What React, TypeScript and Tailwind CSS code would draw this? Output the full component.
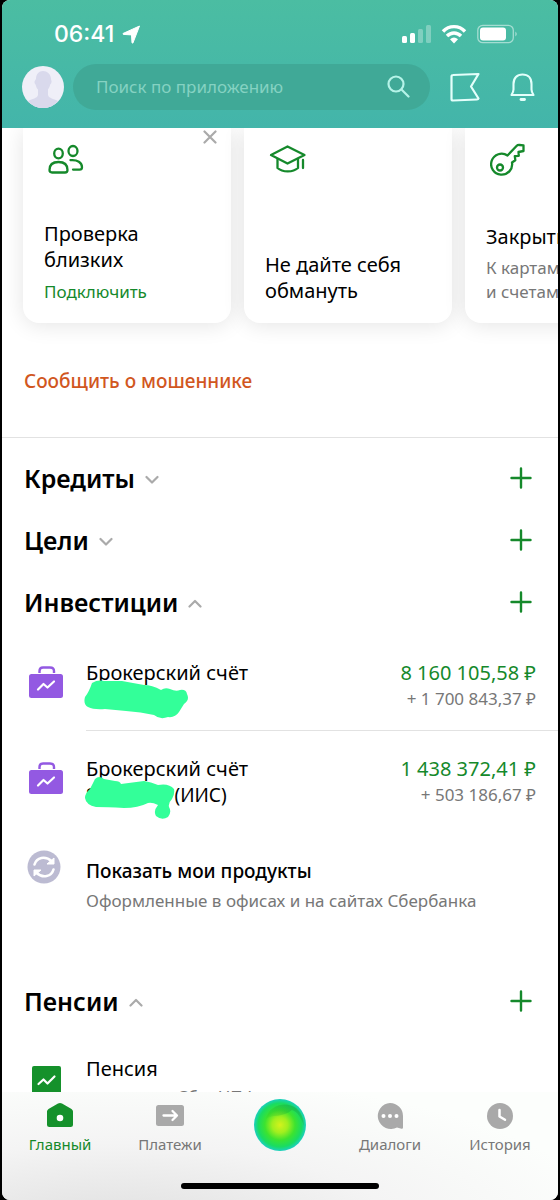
import type { ReactNode } from "react";

const Avatar = () => (
    <svg viewBox="0 0 42 42" className="size-[42px] shrink-0 rounded-full">
        <rect width="42" height="42" fill="#efeff8" />
        <path
            d="M14 13c0-5 3-8 7-8s8 3 8 8c0 1 1 2 .4 3.500-.4 1.500-1.200 1.600-1.600 3.500-.4 1.600-1.300 2.700-1.800 3.500v5c0 3 4 4 8 5.500 3 1 4 3 4 8H4c0-5 1-7 4-8 4-1.500 8-2.500 8-5.500v-5c-1-1-1.600-2-2-3.500-.4-1.900-1.200-2-1.500-3.500-.3-1.500.9-2.300 1.500-3.500Z"
            fill="#d9d9ec"
        />
    </svg>
);

const PeopleIcon = () => (
    <svg width="36" height="32" viewBox="0 0 36 32" fill="none" stroke="#15892b" strokeWidth="2.300" strokeLinecap="round" strokeLinejoin="round">
        <ellipse cx="10.500" cy="10.500" rx="4.300" ry="4.800" />
        <ellipse cx="25" cy="8" rx="4.500" ry="5" />
        <path d="M1.500 27c0-5.500 3-8 9-8s9 2.500 9 8c0 2-1 2.500-2.500 2.500H4c-1.500 0-2.500-.6-2.500-2.500Z" />
        <path d="M22.500 17.200c7-.6 11.500 2.300 11.500 7 0 1.500-1 2.400-2.500 2.400h-6.500" />
    </svg>
);

const GraduationIcon = () => (
    <svg width="38" height="32" viewBox="0 0 38 32" fill="none" stroke="#15892b" strokeWidth="2.300" strokeLinecap="round" strokeLinejoin="round">
        <path d="M2 12 18.500 3.500 35.500 12 18.500 20.500Z" />
        <path d="M8.500 16v9c5 4.500 15.500 4.500 20.500 0v-9M34 17v8" />
    </svg>
);

const KeyIcon = () => (
    <svg width="36" height="36" viewBox="0 0 36 36" fill="none" stroke="#15892b" strokeWidth="2.300" strokeLinecap="round" strokeLinejoin="round">
        <path d="m17.500 12.500 9-9.500q1.200-1.200 3-1l4 .4v5.600l-5 1 .3 3.800-4 .4.500 4-3.300 2.300A10.500 10.500 0 1 1 17.500 12.500Z" />
        <circle cx="10" cy="24.500" r="3" />
    </svg>
);

const PlusIcon = () => (
    <svg width="22" height="22" viewBox="0 0 22 22" fill="none" stroke="#15892b" strokeWidth="2.400" strokeLinecap="round">
        <path d="M11 1.500v19M1.500 11h19" />
    </svg>
);

const Chevron = ({ open }: { open?: boolean }) => (
    <svg width="14" height="10" viewBox="0 0 14 10" fill="none" stroke="#aaa" strokeWidth="2.200" strokeLinecap="round" strokeLinejoin="round" className="mt-1">
        <path d={open ? "m1.500 7.500 5.500-5.500 5.500 5.500" : "M1.500 2 7 7.500 12.500 2"} />
    </svg>
);

const CaseIcon = () => (
    <svg width="34" height="32" viewBox="0 0 34 32" fill="none">
        <path d="M10.500 7V5q0-3.500 3.500-3.500h7Q25 1.500 25 5v2" stroke="#9359e2" strokeWidth="2.400" />
        <rect y="8" width="34" height="24" rx="2.500" fill="#9359e2" />
        <path d="m9 23.500 5.500-5.500 4 3.500 6.500-6" stroke="#fff" strokeWidth="2.200" strokeLinecap="round" strokeLinejoin="round" />
    </svg>
);

const SyncIcon = () => (
    <svg width="34" height="34" viewBox="0 0 34 34" fill="none">
        <circle cx="17" cy="17" r="16.500" fill="#bcbbd2" />
        <path d="M7.500 14.500C9.500 7.500 18 5 25 11.500M26.500 19.500c-2 7-10.500 9.500-17.500 3" stroke="#fff" strokeWidth="2.600" strokeLinecap="round" />
        <path d="M27 8v6h-7ZM7 26v-6h7Z" fill="#fff" stroke="#fff" strokeWidth="1" strokeLinejoin="round" />
    </svg>
);

const ChartIcon = () => (
    <svg width="29" height="30" viewBox="0 0 29 30" fill="none">
        <rect width="29" height="30" rx="2" fill="#15912b" />
        <path d="m6.500 18 5-4.500 4 4 7-7" stroke="#fff" strokeWidth="2.200" strokeLinecap="round" strokeLinejoin="round" />
    </svg>
);

const StatusBar = () => (
    <div className="flex h-16 items-center justify-between pt-1 pr-10 pl-[52px] text-white">
        <div className="flex items-center gap-2 font-['Inter',sans-serif] text-[23px] leading-7 font-medium">
            <span>06:41</span>
            <svg width="19" height="19" viewBox="0 0 19 19" fill="currentColor" stroke="currentColor" strokeLinejoin="round">
                <path d="M17.500 1 1 8.500l.3.900 8.200.5.500 8 .9.200Z" />
            </svg>
        </div>
        <div className="flex items-center gap-2.5">
            <svg width="29" height="20" viewBox="0 0 29 20" fill="currentColor">
                <rect y="12" width="5" height="7" rx="1.500" />
                <rect x="8" y="9" width="5" height="10" rx="1.500" />
                <rect x="16" y="5" width="5" height="14" rx="1.500" opacity=".3" />
                <rect x="24" y="1" width="5" height="18" rx="1.500" opacity=".3" />
            </svg>
            <svg width="26" height="20" viewBox="0 0 26 20" fill="none" stroke="currentColor" strokeWidth="3.400">
                <path d="M2 7.500C8 1 18 1 24 7.500M6 12c4-4 10-4 14 0" />
                <path d="M9 15.200q4-3.200 8 0l-4 4.300Z" fill="currentColor" stroke="none" />
            </svg>
            <svg width="41" height="20" viewBox="0 0 41 20">
                <rect x=".8" y="1.300" width="35.500" height="17.400" rx="5" fill="none" stroke="#fff" strokeOpacity=".5" strokeWidth="1.300" />
                <rect x="3" y="3.500" width="26" height="13" rx="3" fill="#fff" />
                <path d="M38.300 7.500q3 2.500 0 5Z" fill="#fff" opacity=".5" />
            </svg>
        </div>
    </div>
);

const Header = () => (
    <header className="h-32 shrink-0 bg-linear-to-b from-[#4bbda2] to-[#43b5aa]">
        <StatusBar />
        <div className="flex items-center pr-[23px] pl-5">
            <Avatar />
            <label className="ml-[9px] flex h-[46px] min-w-0 flex-1 items-center rounded-full bg-[#40a997] pr-5 pl-[23px]">
                <input
                    type="search"
                    aria-label="Поиск по приложению"
                    placeholder="Поиск по приложению"
                    className="min-w-0 flex-1 bg-transparent text-[17px] leading-6 outline-none placeholder:text-[#85d2c2]"
                />
                <svg width="24" height="24" viewBox="0 0 24 24" fill="none" stroke="#b5f3e8" strokeWidth="2.200" strokeLinecap="round">
                    <circle cx="10" cy="9" r="7.500" />
                    <path d="m15.500 14.500 7 7" />
                </svg>
            </label>
            <button type="button" aria-label="Закладки" className="ml-5">
                <svg width="30" height="30" viewBox="0 0 30 30" fill="none" stroke="#e4fffb" strokeWidth="2.200" strokeLinejoin="round">
                    <path d="M3 3 28.500 2l-7.500 12.500 7.500 12q-.3 1-1.500 1L3 28.500q-1.500 0-1.500-1.500V4.500Q1.500 3 3 3Z" />
                </svg>
            </button>
            <button type="button" aria-label="Уведомления" className="ml-[30px]">
                <svg width="25" height="30" viewBox="0 0 25 30" fill="none" stroke="#e4fffb" strokeWidth="2.100" strokeLinecap="round" strokeLinejoin="round">
                    <path d="M3.500 17.500V12C3.500 6 7 2.500 12.500 2.500S21.500 6 21.500 12v5.500q0 2 2 5.500h-22q2-3.500 2-5.500Z" />
                    <path d="M11 27.500h3.500" strokeWidth="2.800" />
                </svg>
            </button>
        </div>
    </header>
);

const Card = ({ icon, children }: { icon: ReactNode; children: ReactNode }) => (
    <article className="relative flex w-[208px] shrink-0 flex-col justify-between rounded-b-2xl bg-white px-[21px] pt-[15px] shadow-[0_2px_22px_rgba(0,0,0,0.11)]">
        <div className="pl-1">{icon}</div>
        {children}
    </article>
);

const Section = ({ title, open }: { title: string; open?: boolean }) => (
    <div className="flex h-[62px] items-center justify-between pr-[26px] pl-[22px]">
        <h2>
            <button type="button" aria-expanded={!!open} className="flex items-center gap-2.5 text-[25px] leading-8 font-semibold">
                {title}
                <Chevron open={open} />
            </button>
        </h2>
        <button type="button" aria-label={`Добавить: ${title}`}>
            <PlusIcon />
        </button>
    </div>
);

const Account = ({ amount, profit, children }: { amount: string; profit: string; children: ReactNode }) => (
    <div className="flex pl-[27px]">
        <div className="mt-[6px] w-[57px] shrink-0">
            <CaseIcon />
        </div>
        <div className="relative flex-1">
            <p>Брокерский счёт</p>
            {children}
        </div>
        <div className="pr-[22px] text-right">
            <p className="text-[#15892b]">{amount}</p>
            <p className="text-[17px] text-[#777]">{profit}</p>
        </div>
    </div>
);

const Tab = ({ label, active, children }: { label: string; active?: boolean; children: ReactNode }) => (
    <a
        href="#"
        className={`flex flex-col items-center gap-1 text-[15px] leading-5 ${active ? "text-[#15892b]" : "text-[#777]"}`}
    >
        <svg width="28" height="28" viewBox="0 0 28 28" fill={active ? "#15912b" : "#a9a9a9"}>
            {children}
        </svg>
        {label}
    </a>
);

const TabBar = () => (
    <nav className="relative flex h-[108px] shrink-0 flex-col justify-between bg-[radial-gradient(ellipse_at_20%_130%,#dedede_0%,#f4f4f4_45%,#fcfefc_80%)] px-[3px] pt-2.5 pb-[11px]">
        <div className="grid grid-cols-5">
            <Tab label="Главный" active>
                <path d="M14 1q1 0 2 .6l9.500 5.400q1.500 1 1.500 2.500v13q0 2.500-2.500 2.500h-21Q1 25 1 22.500v-13Q1 8 2.500 7L12 1.600Q13 1 14 1Z" />
                <circle cx="14" cy="16" r="3.300" fill="#fff" />
            </Tab>
            <Tab label="Платежи">
                <rect y="3" width="28" height="21" rx="2.500" />
                <path d="M7.500 13.500h13M16.500 9l4.500 4.500-4.500 4.500" fill="none" stroke="#fff" strokeWidth="2.300" strokeLinecap="round" strokeLinejoin="round" />
            </Tab>
            <a href="#" aria-label="Салют" className="flex justify-center">
                <svg width="54" height="54" viewBox="0 0 54 54" className="-mt-1">
                    <defs>
                        <radialGradient id="orb" cx=".5" cy=".5" r=".5">
                            <stop offset="0" stopColor="#d4f21c" />
                            <stop offset=".3" stopColor="#a0ef1f" />
                            <stop offset=".58" stopColor="#3de32f" />
                            <stop offset=".84" stopColor="#19dc62" />
                            <stop offset="1" stopColor="#1ccfc0" />
                        </radialGradient>
                        <linearGradient id="swirl" x1="0" y1="1" x2="1" y2="0">
                            <stop offset="0" stopColor="#36c90f" stopOpacity="0" />
                            <stop offset="1" stopColor="#0f9f55" />
                        </linearGradient>
                    </defs>
                    <circle cx="27" cy="27" r="26" fill="url(#orb)" />
                    <path d="M13 21C15 8 32 2 43 10c5 4 8 11 8 18-3-8-6-14-12-16-9 8-20 4-26 9Z" fill="url(#swirl)" opacity=".65" />
                </svg>
            </a>
            <Tab label="Диалоги">
                <path d="M14 1a13 13 0 0 1 13 13v11.500q0 1.500-1.500 1.200l-4.500-1.300A13 13 0 1 1 14 1Z" />
                <g fill="#fff">
                    <circle cx="7.500" cy="14" r="2" />
                    <circle cx="14" cy="14" r="2" />
                    <circle cx="20.500" cy="14" r="2" />
                </g>
            </Tab>
            <Tab label="История">
                <circle cx="14" cy="14" r="13" />
                <path d="M13.500 8v6.500l5.500 3.300" fill="none" stroke="#fff" strokeWidth="2.500" strokeLinecap="round" strokeLinejoin="round" />
            </Tab>
        </div>
        <div className="h-1.5 w-[198px] self-center rounded-full bg-black" />
    </nav>
);

const App = () => {
    return (
        <div className="h-screen bg-black px-0.5 font-['Noto_Sans',sans-serif] text-black">
            <div className="flex h-full flex-col overflow-hidden rounded-lg bg-white">
                <Header />
                <main className="min-h-0 flex-1 overflow-hidden text-[20px] leading-[26px]">
                    <div className="-mb-10 flex h-[235px] gap-[13px] overflow-hidden pb-10 pl-[21px]">
                        <Card icon={<PeopleIcon />}>
                            <button type="button" aria-label="Закрыть" className="absolute top-0.5 right-3.5">
                                <svg width="14" height="14" viewBox="0 0 14 14" stroke="#aaa" strokeWidth="2.200" strokeLinecap="round">
                                    <path d="m1.500 1.500 11 11m0-11-11 11" />
                                </svg>
                            </button>
                            <div className="pb-[18px]">
                                <h3>
                                    Проверка
                                    <br />
                                    близких
                                </h3>
                                <a href="#" className="mt-1.5 block text-[17px] text-[#15892b]">
                                    Подключить
                                </a>
                            </div>
                        </Card>
                        <Card icon={<GraduationIcon />}>
                            <h3 className="pb-[19px]">
                                Не дайте себя
                                <br />
                                обмануть
                            </h3>
                        </Card>
                        <Card icon={<KeyIcon />}>
                            <div className="pb-[19px] whitespace-nowrap">
                                <h3>Закрыть</h3>
                                <p className="mt-1.5 text-[17px] leading-6 text-[#777]">
                                    К картам
                                    <br />
                                    и счетам
                                </p>
                            </div>
                        </Card>
                    </div>
                    <a href="#" className="relative mt-[45px] mb-[43px] ml-[22px] block text-[19px] font-medium text-[#d1571f]">
                        Сообщить о мошеннике
                    </a>
                    <hr className="mb-[9px] border-[#e2e2e2]" />
                    <Section title="Кредиты" />
                    <Section title="Цели" />
                    <Section title="Инвестиции" open />
                    <div className="mt-[27px]">
                        <Account amount="8 160 105,58 ₽" profit="+ 1 700 843,37 ₽">
                            <svg width="106" height="40" viewBox="0 0 106 40" className="absolute top-5 -left-0.5">
                                <path
                                    d="M8 3Q14-.5 20 1L38 1 60 5Q68 5 77 10 81 7 86 9 92 12 96 10 102 9 103 14 106 20 100 24L95 32Q91 38 84 37 76 40 70 35 57 32 42 31L21 29Q10 30 4 27-1 24 1 17 5 12 8 3Z"
                                    fill="#33ff99"
                                />
                            </svg>
                        </Account>
                    </div>
                    <hr className="mt-[18px] mb-[25px] ml-[84px] border-[#e2e2e2]" />
                    <Account amount="1 438 372,41 ₽" profit="+ 503 186,67 ₽">
                        <p className="flex gap-[78px] text-[19px]">
                            <span>S</span>
                            <span>(ИИС)</span>
                        </p>
                        <svg width="94" height="46" viewBox="0 0 94 46" className="absolute top-5 -left-0.5">
                            <path
                                d="M11 3Q15-1 20 3L31 5Q36 5 37 8L60 5Q67 6 74 9 85 7 90 13 91 18 88 23 84 27 85 31 88 36 84 41 78 45 72 40 69 35 74 29 68 26 64 27 54 32 40 32 23 31 12 31 2 29 1 22 1 17 6 13 8 9 11 3Z"
                                fill="#33ff99"
                            />
                        </svg>
                    </Account>
                    <a href="#" className="mt-[42px] flex pl-[25px]">
                        <span className="w-[59px] shrink-0">
                            <SyncIcon />
                        </span>
                        <span className="pt-2">
                            <span className="block text-[19px] font-medium">Показать мои продукты</span>
                            <span className="mt-1 block text-[17px] text-[#777]">Оформленные в офисах и на сайтах Сбербанка</span>
                        </span>
                    </a>
                    <div className="mt-14">
                        <Section title="Пенсии" open />
                    </div>
                    <div className="mt-6 flex pl-[30px]">
                        <div className="mt-2.5 w-[54px] shrink-0">
                            <ChartIcon />
                        </div>
                        <div>
                            <p>Пенсия</p>
                            <p className="mt-0.5 pl-[91px] text-[17px] text-[#777]">СберНПФ</p>
                        </div>
                    </div>
                </main>
                <TabBar />
            </div>
        </div>
    );
};

export default App;
